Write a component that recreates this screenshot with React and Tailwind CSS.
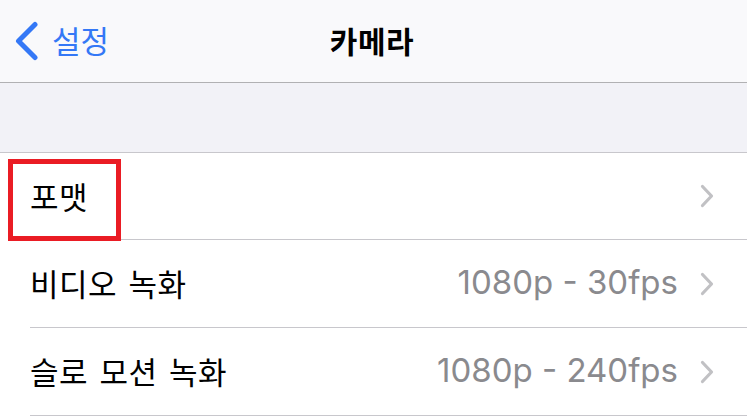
import React from "react";

const ROWS = [
  { label: "포맷", value: "", h: "h-[87px]" },
  { label: "비디오 녹화", value: "1080p - 30fps", h: "h-[88px]" },
  { label: "슬로 모션 녹화", value: "1080p - 240fps", h: "h-[88px]" },
];

function ChevronRight() {
  return (
    <svg width="14" height="24" viewBox="0 0 14 24" fill="none" className="shrink-0">
      <polyline
        points="2.5,2.5 11.5,12 2.5,21.5"
        stroke="#c1c1c4"
        strokeWidth="3.2"
        strokeLinecap="round"
        strokeLinejoin="round"
      />
    </svg>
  );
}

export default function App() {
  return (
    <div
      className="relative w-[747px] h-[419px] overflow-hidden bg-white"
      style={{ fontFamily: '"Noto Sans CJK KR", "Noto Sans", sans-serif' }}
    >
      {/* Nav bar */}
      <div className="relative h-[83px] bg-[#f9f9fb] border-b border-[#b1b1b3] flex items-center">
        <div className="flex items-center pl-[14px] text-[#3478f6]">
          <svg width="26" height="40" viewBox="0 0 26 40" fill="none">
            <polyline
              points="21,3.5 4.5,20 21,36.5"
              stroke="#3478f6"
              strokeWidth="5"
              strokeLinecap="round"
              strokeLinejoin="round"
            />
          </svg>
          <span className="ml-[12px] text-[31px] leading-none -mt-[3px]">설정</span>
        </div>
        <div className="absolute inset-x-0 top-0 h-[82px] flex items-center justify-center pointer-events-none">
          <span className="text-[30px] font-bold leading-none text-black -mt-[3px] -ml-[3px] tracking-[0.5px]">카메라</span>
        </div>
      </div>

      {/* Group header */}
      <div className="h-[70px] bg-[#f2f2f7] border-b border-[#c8c7cc]" />

      {/* Rows */}
      <div className="bg-white">
        {ROWS.map((row) => (
          <div key={row.label} className={`${row.h} pl-[30px]`}>
            <div className="h-full flex items-center border-b border-[#c8c7cc] pr-[33px]">
              <span className="text-[31px] leading-none text-black -mt-[2px] flex-1 [word-spacing:4px] tracking-[0.5px]">
                {row.label}
              </span>
              {row.value && (
                <span
                  className="text-[33px] leading-none text-[#8a8a8e] mr-[22px] -mt-[2px]"
                  style={{ fontFamily: 'Inter, "Noto Sans", sans-serif' }}
                >
                  {row.value}
                </span>
              )}
              <ChevronRight />
            </div>
          </div>
        ))}
      </div>

      {/* Highlight annotation */}
      <div className="absolute left-[8px] top-[159px] w-[113px] h-[82px] border-[5px] border-[#ea1c24]" />
    </div>
  );
}
